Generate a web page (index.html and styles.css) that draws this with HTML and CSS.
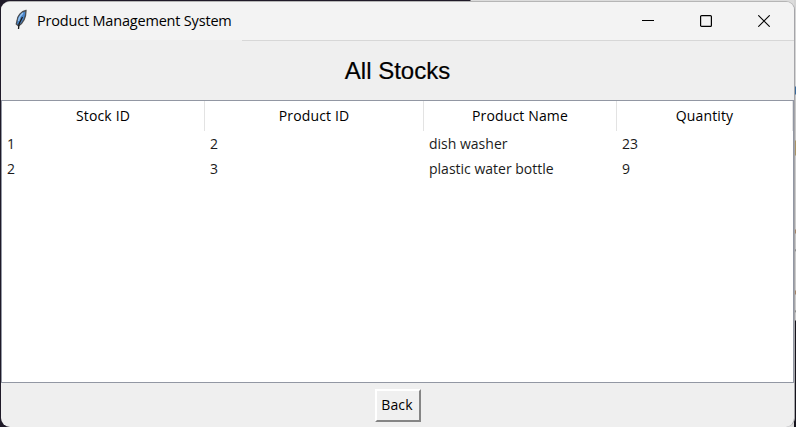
FILE: index.html
```html
<!DOCTYPE html>
<html lang="en">
<head>
<meta charset="utf-8">
<title>Product Management System</title>
<link rel="stylesheet" href="styles.css">
</head>
<body>
<div class="backdrop"></div>
<main class="window">
  <header class="titlebar">
    <svg class="feather" width="14" height="22" viewBox="0 0 14 22">
      <path d="M12 1.500C7.500 2 3 7 3 12L2.300 15L4.500 17C9 14 12 8 12 1.500Z" fill="#4a86cb" stroke="#4b4d50" stroke-width="1.300"/>
      <path d="M9 4C6.500 6 5 9 4.500 12" fill="none" stroke="#9bc7f1" stroke-width="1.300"/>
      <path d="M8.500 8L5 15L4.500 20" fill="none" stroke="#1b1b1b" stroke-width="1.300"/>
    </svg>
    <span class="title">Product Management System</span>
    <div class="controls">
      <svg width="12" height="12" viewBox="0 0 12 12"><path d="M0 5.500H12" stroke="#000"/></svg>
      <svg width="12" height="12" viewBox="0 0 12 12"><rect x=".6" y=".6" width="10.800" height="10.800" rx="1" fill="none" stroke="#000" stroke-width="1.200"/></svg>
      <svg width="12" height="12" viewBox="0 0 12 12"><path d="M.3.3L11.700 11.700M11.700.3L.3 11.700" stroke="#000" stroke-width="1.100"/></svg>
    </div>
  </header>
  <h1 class="heading">All Stocks</h1>
  <section class="tree">
    <div class="row head"><span>Stock ID</span><span>Product ID</span><span>Product Name</span><span>Quantity</span></div>
    <div class="row"><span>1</span><span>2</span><span>dish washer</span><span>23</span></div>
    <div class="row"><span>2</span><span>3</span><span>plastic water bottle</span><span>9</span></div>
  </section>
  <footer class="footer"><button class="back">Back</button></footer>
</main>
</body>
</html>
```
FILE: styles.css
```css
* { box-sizing: border-box; }
body {
  margin: 0;
  width: 796px;
  height: 427px;
  overflow: hidden;
  padding: 1px 1px 0 1px;
  background: linear-gradient(90deg, #1f1a28 470px, #dcdcdc 471px);
  font-family: "Open Sans", "Noto Sans", sans-serif;
  color: #000;
}
.backdrop {
  position: absolute;
  left: 794px;
  top: 0;
  width: 2px;
  height: 427px;
  background: linear-gradient(#d4d4d4 86px, #396a9a 87px 94px, #c8c8c8 95px 140px, #aa9466 141px 155px, #ccc 156px 229px, #a38469 230px 233px, #c8c8c8 234px 249px, #777 250px, #ccc 252px 290px, #a38469 291px 294px, #ccc 295px 310px, #777 311px, #ccc 313px 320px, #15131c 321px);
}
.window {
  position: relative;
  display: flex;
  flex-direction: column;
  width: 794px;
  height: 426px;
  border-radius: 9px;
  overflow: hidden;
  background: #efefef;
  border-right: 1px solid #a5a5a9;
  border-top: 1px solid #b5b5b5;
}
.titlebar {
  display: flex;
  align-items: center;
  height: 39px;
  padding-left: 13px;
  background: linear-gradient(90deg, #efefef 241px, #d7d7d7 241px) bottom / 100% 1px no-repeat #f3f3f3;
}
.feather { margin-top: -3px; }
.title {
  margin: -2px 0 0 9px;
  font-size: 14.5px;
  line-height: 20px;
  letter-spacing: -0.19px;
  white-space: nowrap;
}
.controls {
  display: flex;
  gap: 46px;
  margin: -1px 24px 0 auto;
}
.controls svg { display: block; }
.heading {
  margin: 0;
  height: 59px;
  padding-top: 15px;
  text-align: center;
  font: 24px/30px "Liberation Sans", Arial, sans-serif;
  -webkit-text-stroke: 0.2px #000;
}
.tree {
  height: 283px;
  border: 1px solid #9297a3;
  background: #fff;
}
.row {
  display: grid;
  grid-template-columns: 203px 219px 193px 1fr;
  height: 25px;
  font-size: 14px;
  line-height: 25px;
  color: #1b1b1b;
}
.row span { padding-left: 5px; white-space: nowrap; }
.head {
  height: 30px;
  line-height: 30px;
  color: #000;
  letter-spacing: 0.15px;
}
.head span {
  padding: 0;
  text-align: center;
  border-right: 1px solid #e3e3e3;
}
.footer {
  flex: 1;
  display: flex;
  justify-content: center;
  align-items: flex-start;
  padding-top: 6px;
}
.back {
  width: 46px;
  height: 33px;
  padding: 0 1px 1px 0;
  border: 2px solid;
  border-color: #fff #858585 #858585 #fff;
  background: #f0f0f0;
  font: 14px/20px "Open Sans", "Noto Sans", sans-serif;
  letter-spacing: 0.1px;
  color: #000;
}
```
